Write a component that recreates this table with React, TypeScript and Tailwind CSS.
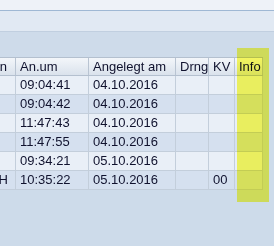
import React from 'react';

const widths = ['w-[16px]', 'w-[73px]', 'w-[87px]', 'w-[33px]', 'w-[26px]', 'w-[28px]'];

const header = ['Ben', 'An.um', 'Angelegt am', 'Drng', 'KV', 'Info'];

const rows: string[][] = [
  ['', '09:04:41', '04.10.2016', '', '', ''],
  ['', '09:04:42', '04.10.2016', '', '', ''],
  ['', '11:47:43', '04.10.2016', '', '', ''],
  ['', '11:47:55', '04.10.2016', '', '', ''],
  ['', '09:34:21', '05.10.2016', '', '', ''],
  ['TECH', '10:35:22', '05.10.2016', '', '00', ''],
];

const font = { fontFamily: '"Liberation Sans", Arial, sans-serif' };

const App: React.FC = () => {
  return (
    <div className="relative w-[274px] h-[246px] overflow-hidden bg-[#cddbea] text-[13px] text-[#10122e]" style={font}>
      {/* toolbar strips above the grid */}
      <div className="h-[10px] bg-[#eef2f8]" />
      <div className="h-[21px] bg-[#e1e9f3] border-t border-[#9fb8d4]" />
      <div className="h-[26px] bg-[#cedbea] border-t border-[#c1cfe0]" />

      <div className="w-[263px]">
        <div className="flex h-[19px] bg-gradient-to-b from-[#f3f6fa] to-[#dae2ec] border-t border-b border-[#b4c0cf]">
          {header.map((h, i) => (
            <div
              key={i}
              className={`${widths[i]} shrink-0 h-full overflow-hidden whitespace-nowrap border-r border-[#b9c4d2] leading-[17px] ${
                i === 0 ? 'flex justify-end pr-[8px]' : 'pl-[4px]'
              }`}
            >
              {h}
            </div>
          ))}
        </div>
        {rows.map((r, ri) => (
          <div
            key={ri}
            className={`flex h-[19px] border-b border-[#c3cedb] ${ri % 2 === 0 ? 'bg-[#e9eff7]' : 'bg-[#d5e0ef]'}`}
          >
            {r.map((c, ci) => (
              <div
                key={ci}
                className={`${widths[ci]} shrink-0 h-full overflow-hidden whitespace-nowrap border-r border-[#c3cedb] leading-[18px] ${
                  ci === 0 ? 'flex justify-end pr-[7px]' : 'pl-[4px]'
                }`}
              >
                {c}
              </div>
            ))}
          </div>
        ))}
      </div>

      {/* highlighter mark over the Info column */}
      <div className="absolute left-[237px] top-[48px] w-[32px] h-[154px] bg-[#fffe62] mix-blend-multiply" />
    </div>
  );
};

export default App;
